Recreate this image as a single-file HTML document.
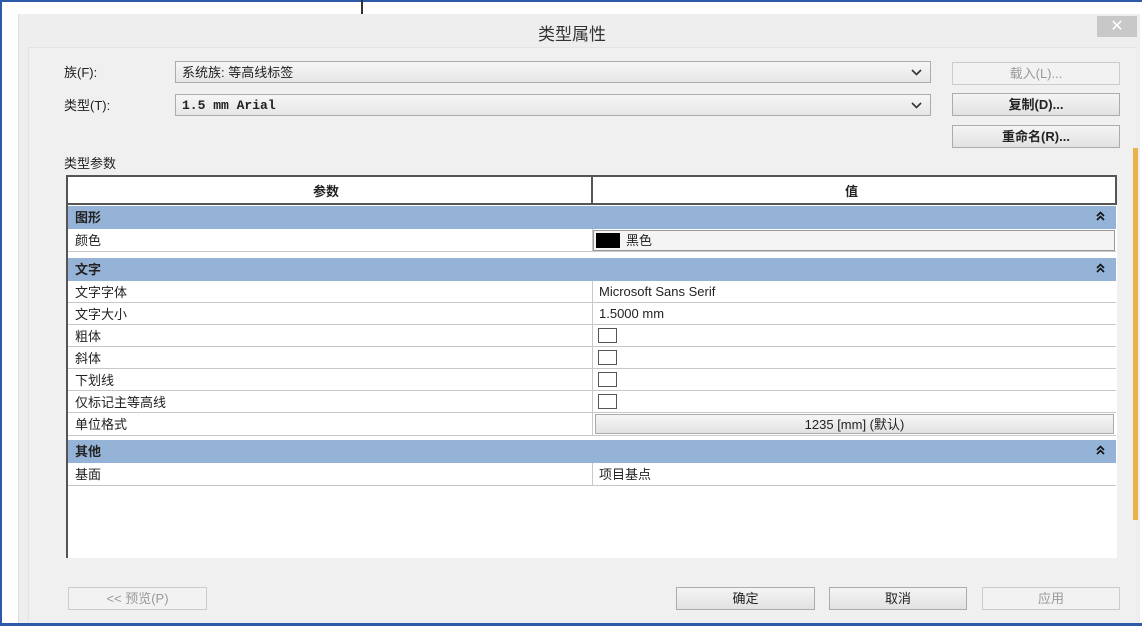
<!DOCTYPE html>
<html><head><meta charset="utf-8"><style>
*{margin:0;padding:0;box-sizing:border-box}
body{width:1142px;height:626px;position:relative;background:#fff;font-family:"Liberation Sans","Noto Sans CJK SC",sans-serif;font-size:14px;color:#222;overflow:hidden}
.a{position:absolute}
.dlg{left:18px;top:14px;width:1122px;height:609px;background:#eeeeee;border-left:1px solid #ddd}
.panel{left:28px;top:47px;width:1108px;height:574px;background:#f0f0f0;border-top:1px solid #e4e4e4;border-left:1px solid #e4e4e4}
.combo{background:linear-gradient(#f6f6f6,#e6e6e6);border:1px solid #acacac;height:22px;font-size:13px;padding:0 6px;line-height:21px}
.btn{border:1px solid #acacac;background:linear-gradient(#f4f4f4,#e2e2e2);text-align:center;font-size:13px;line-height:21px;height:23px}
.dis{color:#999;border-color:#ccc;background:#f2f2f2}
.row{position:absolute;left:68px;width:1048px;background:#fff;border-bottom:1px solid #c8c8c8;font-size:13px;line-height:20px}
.row .l{position:absolute;left:7px;top:2px}
.row .v{position:absolute;left:531px;top:1px}
.row .d{position:absolute;left:524px;top:0;bottom:0;border-left:1px solid #c8c8c8}
.grp{position:absolute;left:68px;width:1048px;background:#95b3d6;font-weight:bold;font-size:13px;line-height:21px}
.grp span{position:absolute;left:7px;top:1px}
.grp svg{position:absolute;right:11px;top:5px}
.cb{position:absolute;left:530px;top:3px;width:19px;height:15px;border:1px solid #555;background:#fff}
</style></head><body>
<div class="a" style="left:0;top:0;width:1142px;height:2px;background:#2c5aa8"></div>
<div class="a" style="left:0;top:0;width:2px;height:626px;background:#2c5aa8"></div>
<div class="a" style="left:0;top:623px;width:1142px;height:3px;background:#2c5aa8"></div>
<div class="a" style="left:361px;top:0;width:2px;height:14px;background:#333"></div>
<div class="a dlg"></div>
<div class="a panel"></div>
<div class="a" style="left:538px;top:20px;font-size:17px;color:#333">类型属性</div>
<div class="a" style="left:1097px;top:16px;width:40px;height:21px;background:#c8c8c8;color:#fff;text-align:center;font-size:16px;line-height:21px">✕</div>
<div class="a" style="left:1133px;top:148px;width:5px;height:372px;background:#e8b44a"></div>
<div class="a" style="left:64px;top:62px;font-size:13px">族(F):</div>
<div class="a" style="left:64px;top:95px;font-size:13px">类型(T):</div>
<div class="a combo" style="left:175px;top:61px;width:756px">系统族: 等高线标签<svg style="position:absolute;right:8px;top:7px" width="11" height="7"><path d="M1 1l4.5 4.5L10 1" stroke="#333" stroke-width="1.6" fill="none"/></svg></div>
<div class="a combo" style="left:175px;top:94px;width:756px;font-family:'Liberation Mono',monospace;font-weight:bold">1.5 mm Arial<svg style="position:absolute;right:8px;top:7px" width="11" height="7"><path d="M1 1l4.5 4.5L10 1" stroke="#333" stroke-width="1.6" fill="none"/></svg></div>
<div class="a btn dis" style="left:952px;top:62px;width:168px">载入(L)...</div>
<div class="a btn" style="left:952px;top:93px;width:168px;font-weight:bold">复制(D)...</div>
<div class="a btn" style="left:952px;top:125px;width:168px;font-weight:bold">重命名(R)...</div>
<div class="a" style="left:64px;top:153px;font-size:13px">类型参数</div>
<div class="a" style="left:66px;top:175px;width:1051px;height:383px;background:#fff;border-left:2px solid #555"></div>
<div class="a" style="left:66px;top:175px;width:1051px;height:30px;border:2px solid #555;background:#fff"></div>
<div class="a" style="left:591px;top:175px;width:2px;height:30px;background:#555"></div>
<div class="a" style="left:313px;top:181px;font-weight:bold;font-size:13px">参数</div>
<div class="a" style="left:845px;top:181px;font-weight:bold;font-size:13px">值</div>
<div class="grp" style="top:206px;height:23px"><span>图形</span><svg width="9" height="10"><path d="M1 5l3.5-3.5L8 5M1 9l3.5-3.5L8 9" stroke="#111" stroke-width="1.6" fill="none"/></svg></div>
<div class="row" style="top:229px;height:23px"><span class="l">颜色</span><div class="d"></div><div style="position:absolute;left:525px;top:1px;right:1px;bottom:0;border:1px solid #999;background:#f4f4f4"></div><div style="position:absolute;left:528px;top:4px;width:24px;height:15px;background:#000"></div><span class="v" style="left:558px;top:2px">黑色</span></div>
<div class="grp" style="top:258px;height:23px"><span>文字</span><svg width="9" height="10"><path d="M1 5l3.5-3.5L8 5M1 9l3.5-3.5L8 9" stroke="#111" stroke-width="1.6" fill="none"/></svg></div>
<div class="row" style="top:281px;height:22px"><span class="l">文字字体</span><div class="d"></div><span class="v">Microsoft Sans Serif</span></div>
<div class="row" style="top:303px;height:22px"><span class="l">文字大小</span><div class="d"></div><span class="v">1.5000 mm</span></div>
<div class="row" style="top:325px;height:22px"><span class="l">粗体</span><div class="d"></div><div class="cb"></div></div>
<div class="row" style="top:347px;height:22px"><span class="l">斜体</span><div class="d"></div><div class="cb"></div></div>
<div class="row" style="top:369px;height:22px"><span class="l">下划线</span><div class="d"></div><div class="cb"></div></div>
<div class="row" style="top:391px;height:22px"><span class="l">仅标记主等高线</span><div class="d"></div><div class="cb"></div></div>
<div class="row" style="top:413px;height:23px"><span class="l">单位格式</span><div class="d"></div><div style="position:absolute;left:527px;top:1px;right:2px;bottom:1px;border:1px solid #aaa;background:linear-gradient(#f6f6f6,#e2e2e2);text-align:center;line-height:19px">1235 [mm] (默认)</div></div>
<div class="grp" style="top:440px;height:23px"><span>其他</span><svg width="9" height="10"><path d="M1 5l3.5-3.5L8 5M1 9l3.5-3.5L8 9" stroke="#111" stroke-width="1.6" fill="none"/></svg></div>
<div class="row" style="top:463px;height:23px"><span class="l">基面</span><div class="d"></div><span class="v" style="top:2px">项目基点</span></div>
<div class="a btn dis" style="left:68px;top:587px;width:139px">&lt;&lt; 预览(P)</div>
<div class="a btn" style="left:676px;top:587px;width:139px">确定</div>
<div class="a btn" style="left:829px;top:587px;width:138px">取消</div>
<div class="a btn dis" style="left:982px;top:587px;width:138px">应用</div>
</body></html>
